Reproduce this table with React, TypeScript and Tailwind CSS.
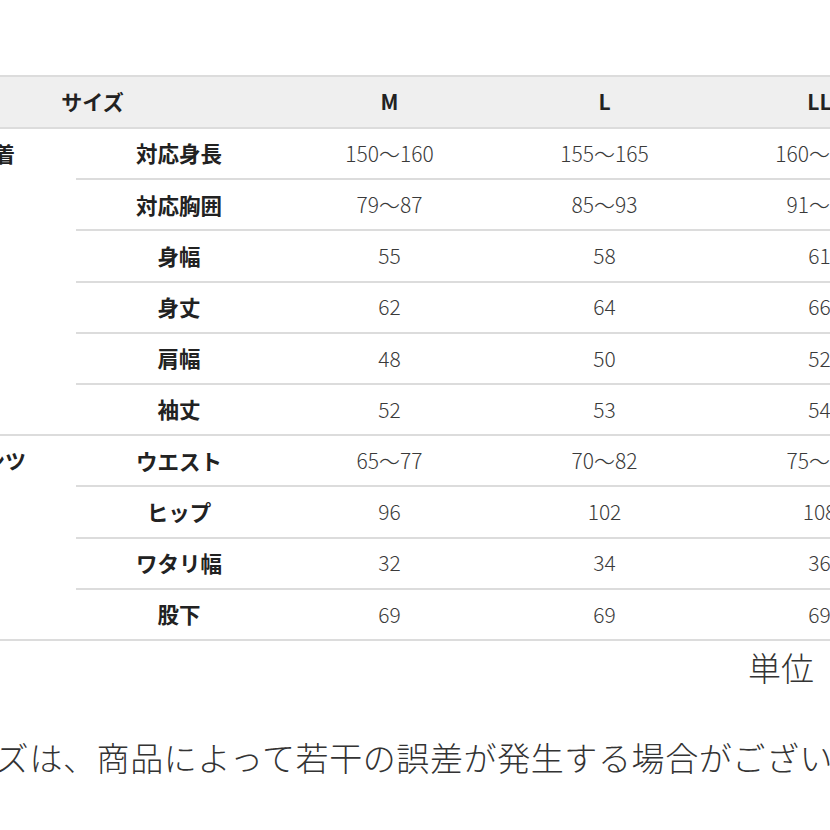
import React from "react";

const SIZES = ["M", "L", "LL", "3L"];

const GROUPS = [
  {
    name: "上着",
    rows: [
      { label: "対応身長", values: ["150〜160", "155〜165", "160〜170", "165〜175"] },
      { label: "対応胸囲", values: ["79〜87", "85〜93", "91〜99", "97〜105"] },
      { label: "身幅", values: ["55", "58", "61", "64"] },
      { label: "身丈", values: ["62", "64", "66", "68"] },
      { label: "肩幅", values: ["48", "50", "52", "54"] },
      { label: "袖丈", values: ["52", "53", "54", "55"] },
    ],
  },
  {
    name: "パンツ",
    rows: [
      { label: "ウエスト", values: ["65〜77", "70〜82", "75〜87", "80〜92"] },
      { label: "ヒップ", values: ["96", "102", "108", "114"] },
      { label: "ワタリ幅", values: ["32", "34", "36", "38"] },
      { label: "股下", values: ["69", "69", "69", "69"] },
    ],
  },
];

export default function App() {
  return (
    <div
      className="w-[830px] h-[830px] overflow-hidden bg-white text-[#222]"
      style={{ fontFamily: '"Noto Sans CJK JP", "Noto Sans", sans-serif' }}
    >
      <div className="ml-[-88px] mt-[75px] w-[1230px]">
        {/* header */}
        <div className="flex h-[54px] items-center border-y-2 border-[#dcdcdc] bg-[#efefef] text-[21px] font-bold">
          <div className="w-[370px] pr-[9px] text-center">サイズ</div>
          {SIZES.map((s) => (
            <div key={s} className="w-[215px] text-center">
              {s}
            </div>
          ))}
        </div>

        {GROUPS.map((g) => (
          <div key={g.name} className="flex border-b-2 border-[#dcdcdc]">
            <div className="flex h-[49.2px] w-[164px] items-center justify-center text-[21px] font-bold">
              {g.name}
            </div>
            <div className="flex flex-col">
              {g.rows.map((r, i) => (
                <div
                  key={r.label}
                  className={
                    i < g.rows.length - 1
                      ? "flex h-[51.2px] items-center border-b-2 border-[#dcdcdc]"
                      : "flex h-[49.2px] items-center"
                  }
                >
                  <div className="w-[206px] text-center text-[21.5px] font-bold">{r.label}</div>
                  {r.values.map((v, j) => (
                    <div key={j} className="w-[215px] text-center text-[21px] font-light text-[#3a3a3a]">
                      {v}
                    </div>
                  ))}
                </div>
              ))}
            </div>
          </div>
        ))}
      </div>

      <div className="ml-[748px] mt-[10px] whitespace-nowrap text-[33px] font-light leading-none text-[#333]">
        単位　cm
      </div>

      <div className="ml-[-104px] mt-[57px] whitespace-nowrap text-[33px] font-light leading-none tracking-[0.6px] text-[#333]">
        ※サイズは、商品によって若干の誤差が発生する場合がございます。
      </div>
    </div>
  );
}
